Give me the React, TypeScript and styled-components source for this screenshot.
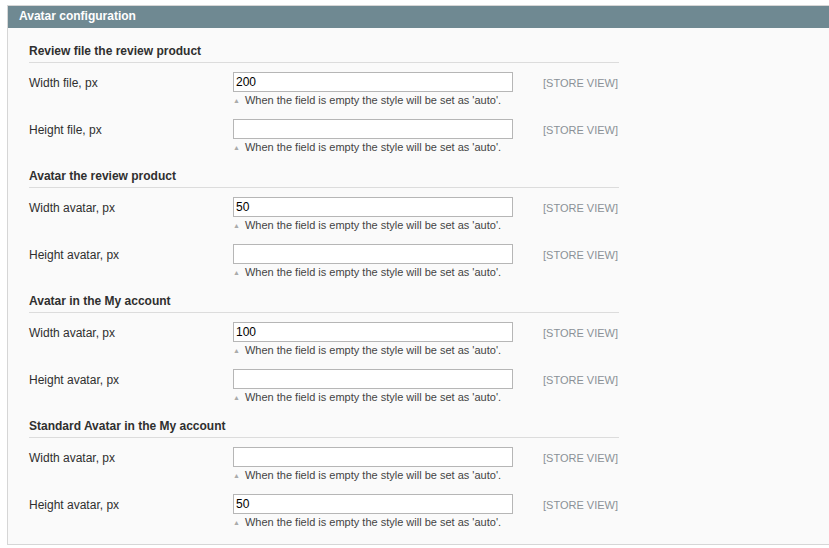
import React from "react";
import styled, { createGlobalStyle } from "styled-components";

const G = createGlobalStyle`
  body { margin: 0; background: #fff; font-family: "Liberation Sans", Arial, sans-serif; font-size: 12px; color: #2f2f2f; }
`;
const Panel = styled.div`
  margin: 5px 0 0 7px; border: 1px solid #d6d6d6; border-right: none; background: #fafafa; height: 540px; box-sizing: border-box;
`;
const Head = styled.div`
  background: #6f8992; color: #fff; font-weight: bold; height: 22px; line-height: 21px; padding-left: 11px; font-size: 12px;
`;
const Body = styled.div` padding: 16px 0 0 21px; `;
const Group = styled.div` & + & { margin-top: 3px; } `;
const Section = styled.div`
  width: 590px; font-weight: bold; color: #2f2f2f; padding: 0 0 4px 0; border-bottom: 1px solid #dcdcdc; margin-bottom: 9px; line-height: 14px;
`;
const Row = styled.div` display: grid; grid-template-columns: 204px 280px auto; height: 47px; `;
const Label = styled.div` padding-top: 4px; `;
const Field = styled.div``;
const Input = styled.div`
  height: 20px; box-sizing: border-box; border: 1px solid #b6b6b6; background: #fff; padding: 2px 2px; font-size: 12px; color: #000; line-height: 14px;
`;
const Note = styled.div` font-size: 11px; color: #444; margin-top: 2px; line-height: 13px; &::before { content: "▲"; color: #aaa; font-size: 7px; margin-right: 5px; vertical-align: 1px; } `;
const Scope = styled.div` color: #8a9197; font-size: 11px; padding: 5px 0 0 30px; `;

const data: [string, [string, string][]][] = [
  ["Review file the review product", [["Width file, px", "200"], ["Height file, px", ""]]],
  ["Avatar the review product", [["Width avatar, px", "50"], ["Height avatar, px", ""]]],
  ["Avatar in the My account", [["Width avatar, px", "100"], ["Height avatar, px", ""]]],
  ["Standard Avatar in the My account", [["Width avatar, px", ""], ["Height avatar, px", "50"]]],
];

export default function App() {
  return (
    <>
      <G />
      <Panel>
        <Head>Avatar configuration</Head>
        <Body>
          {data.map(([t, rows]) => (
            <Group key={t}>
              <Section>{t}</Section>
              {rows.map(([l, v]) => (
                <Row key={l}>
                  <Label>{l}</Label>
                  <Field>
                    <Input>{v}</Input>
                    <Note>When the field is empty the style will be set as 'auto'.</Note>
                  </Field>
                  <Scope>[STORE VIEW]</Scope>
                </Row>
              ))}
            </Group>
          ))}
        </Body>
      </Panel>
    </>
  );
}
